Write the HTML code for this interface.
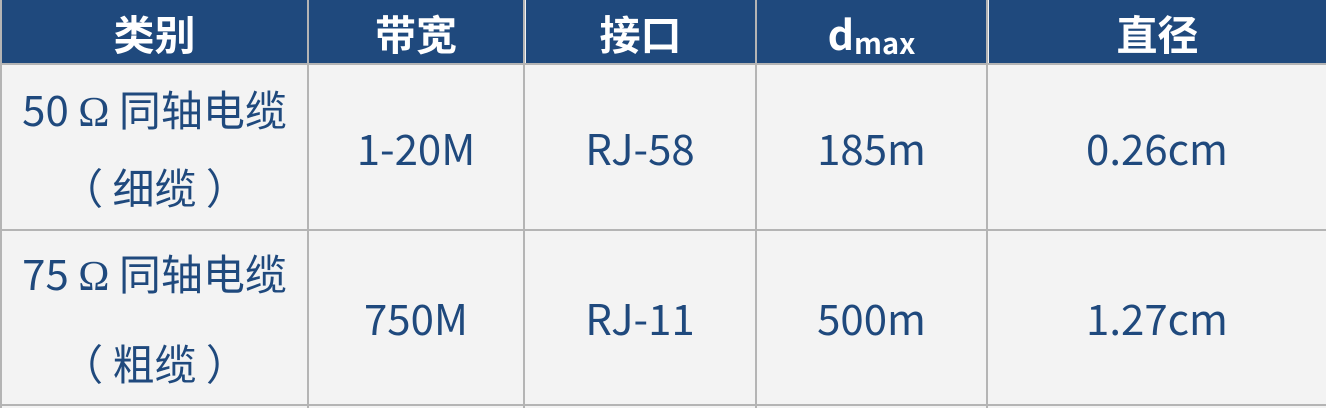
<!DOCTYPE html>
<html><head><meta charset="utf-8"><style>
body{margin:0;width:1326px;height:408px;background:#f3f3f3;overflow:hidden;position:relative;font-family:"Liberation Sans","Noto Sans CJK SC",sans-serif}
.h{position:absolute;top:0;height:63px;background:#1f497d;color:#fff;font-weight:bold;font-size:41px;display:flex;align-items:center;justify-content:center;font-family:"Noto Sans CJK SC",sans-serif}
.c{position:absolute;color:#1f497d;font-size:42px;display:flex;align-items:center;justify-content:center;text-align:center;line-height:73px;font-family:"Noto Sans CJK SC",sans-serif}
.r2{line-height:85px}
.o{font-family:"Liberation Serif",serif}
.v{position:absolute;background:#b4b4b4;width:2px;top:0;height:408px}
.hl{position:absolute;background:#b4b4b4;height:2px;left:0;width:1326px}
</style></head><body>
<div class="h" style="left:2px;width:305px">类别</div>
<div class="h" style="left:309px;width:214px">带宽</div>
<div class="h" style="left:526px;width:229px">接口</div>
<div class="h" style="left:757px;width:229px"><span>d</span><span style="font-size:29px;position:relative;top:10px">max</span></div>
<div class="h" style="left:989px;width:337px">直径</div>
<div class="v" style="left:0"></div><div class="v" style="left:307px"></div><div class="v" style="left:523px"></div><div class="v" style="left:755px"></div><div class="v" style="left:986px"></div>
<div class="hl" style="top:63px"></div><div class="hl" style="top:229px"></div><div class="hl" style="top:404px"></div>
<div class="c" style="left:2px;width:305px;top:65px;height:164px"><div>50 <span class="o">Ω</span> 同轴电缆<br>（ 细缆 ）</div></div>
<div class="c" style="left:309px;width:214px;top:65px;height:164px">1-20M</div>
<div class="c" style="left:525px;width:230px;top:65px;height:164px">RJ-58</div>
<div class="c" style="left:757px;width:229px;top:65px;height:164px">185m</div>
<div class="c" style="left:988px;width:338px;top:65px;height:164px">0.26cm</div>
<div class="c r2" style="left:2px;width:305px;top:231px;height:173px"><div>75 <span class="o">Ω</span> 同轴电缆<br>（ 粗缆 ）</div></div>
<div class="c" style="left:309px;width:214px;top:231px;height:173px">750M</div>
<div class="c" style="left:525px;width:230px;top:231px;height:173px">RJ-11</div>
<div class="c" style="left:757px;width:229px;top:231px;height:173px">500m</div>
<div class="c" style="left:988px;width:338px;top:231px;height:173px">1.27cm</div>
</body></html>
